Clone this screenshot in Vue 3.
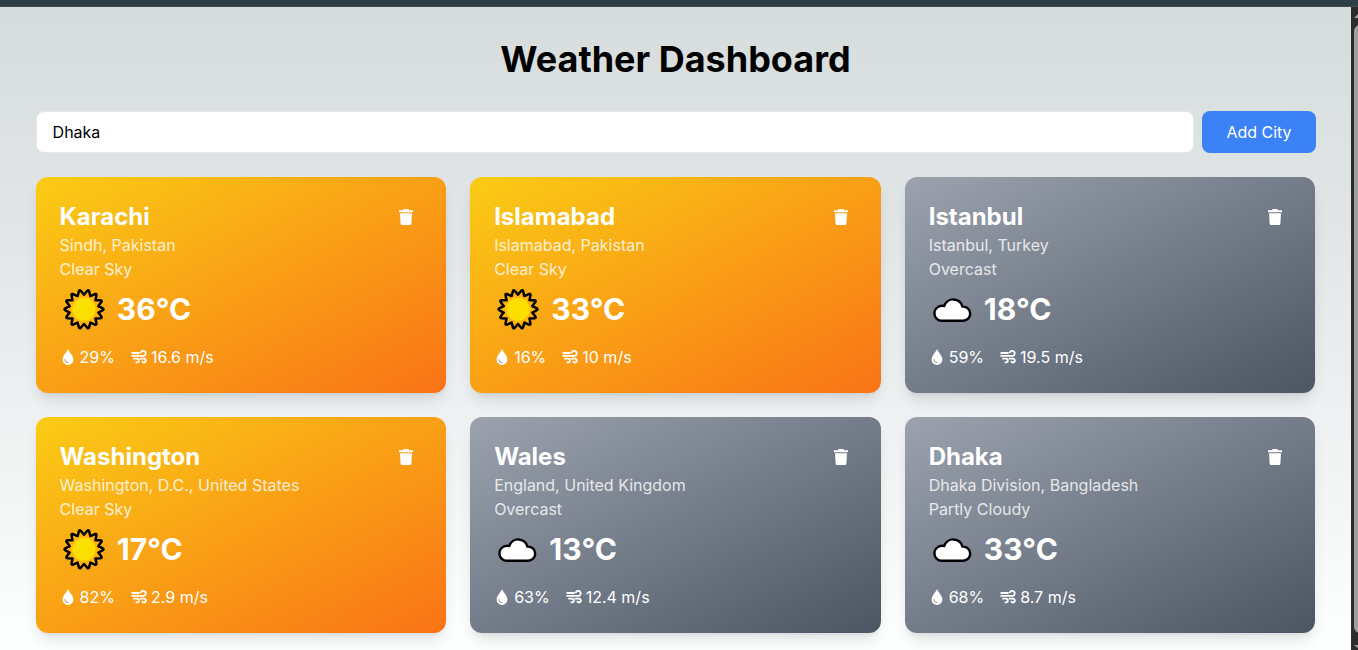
<script setup>
import { ref } from 'vue'

const city = ref('Dhaka')
const cards = ref([
  { name: 'Karachi', region: 'Sindh, Pakistan', sky: 'Clear Sky', temp: 36, humidity: 29, wind: 16.6 },
  { name: 'Islamabad', region: 'Islamabad, Pakistan', sky: 'Clear Sky', temp: 33, humidity: 16, wind: 10 },
  { name: 'Istanbul', region: 'Istanbul, Turkey', sky: 'Overcast', temp: 18, humidity: 59, wind: 19.5 },
  { name: 'Washington', region: 'Washington, D.C., United States', sky: 'Clear Sky', temp: 17, humidity: 82, wind: 2.9 },
  { name: 'Wales', region: 'England, United Kingdom', sky: 'Overcast', temp: 13, humidity: 63, wind: 12.4 },
  { name: 'Dhaka', region: 'Dhaka Division, Bangladesh', sky: 'Partly Cloudy', temp: 33, humidity: 68, wind: 8.7 },
])
const remove = (i) => cards.value.splice(i, 1)

// Fourteen rounded rays around the sun, with a notch at twelve o'clock
const at = (r, a) => `${(24 + r * Math.sin(a)).toFixed(2)} ${(24.3 - r * Math.cos(a)).toFixed(2)}`
const step = (2 * Math.PI) / 14
const rays = 'M' + Array.from({ length: 14 }, (_, i) => {
  const a = i * step
  const tip = a + step / 2
  return `${i ? 'L' : ''}${at(14.7, a)}L${at(18.8, tip - 0.05)}Q${at(20.3, tip)} ${at(18.8, tip + 0.05)}`
}).join('') + 'Z'
</script>

<template>
  <div class="window">
    <div class="chrome"></div>
    <div class="body">
      <main class="page">
        <h1>Weather Dashboard</h1>
        <form class="search" @submit.prevent>
          <input v-model="city" type="text" />
          <button class="add" type="submit">Add City</button>
        </form>
        <section class="grid">
          <article v-for="(c, i) in cards" :key="c.name" class="card" :class="c.sky === 'Clear Sky' ? 'sunny' : 'cloudy'">
            <header>
              <h2>{{ c.name }}</h2>
              <button class="trash" type="button" aria-label="Remove" @click="remove(i)">
                <svg width="16" height="18" viewBox="0 0 16 18"><path d="M1 2.2h3.8L5.7 1.1h4.6l.9 1.1H15v2H1zM2 5.2h12l-.6 10.3q-.1 1.5-1.5 1.5H4.1q-1.4 0-1.5-1.5z" /></svg>
              </button>
            </header>
            <p>{{ c.region }}</p>
            <p>{{ c.sky }}</p>
            <div class="now">
              <svg v-if="c.sky === 'Clear Sky'" class="sun" width="48" height="48" viewBox="0 0 48 48">
                <path :d="rays" fill="#ffb30f" stroke="#000" stroke-width="2.5" stroke-linejoin="round" />
                <circle cx="24" cy="24.3" r="11.6" fill="#fbdf00" />
              </svg>
              <svg v-else class="cloud" width="46" height="48" viewBox="0.5 0 46 48">
                <path d="M13.4 35.8H34.6a7.1 7.1 0 0 0 0-14.2L33.9 21.6A9.4 9.4 0 0 0 15.8 21Q14.6 20.7 13.4 20.8a7.5 7.5 0 0 0 0 15z" fill="#fff" stroke="#000" stroke-width="2.4" stroke-linejoin="round" />
              </svg>
              <strong>{{ c.temp }}°C</strong>
            </div>
            <footer>
              <span class="stat">
                <svg width="16" height="18" viewBox="0 0 16 18"><path d="M8 1C6.8 4.2 2.6 7.6 2.6 11.5a5.4 5.4 0 0 0 10.8 0C13.4 7.6 9.2 4.2 8 1z" /><path class="shine" d="M4.7 11.7a3.2 3.2 0 0 0 3.3 3" /></svg>
                {{ c.humidity }}%
              </span>
              <span class="stat">
                <svg class="wind" width="16" height="16" viewBox="0 0 16 16"><path d="M1.2 4H8M1.2 6.9H12.6a2.5 2.5 0 1 0-2.7-3.5M3 9.7H6a1.8 1.8 0 0 1 0 3.7H5.4M9.5 9.7h3.7a1.9 1.9 0 1 1-1.8 3" /></svg>
                {{ c.wind }} m/s
              </span>
            </footer>
          </article>
        </section>
      </main>
      <aside class="scrollbar">
        <span class="arrow up"></span>
        <span class="thumb"></span>
        <span class="arrow down"></span>
      </aside>
    </div>
  </div>
</template>

<style>
body { margin: 0; overflow: hidden; }
</style>

<style scoped>
* { box-sizing: border-box; }
.window { width: 1358px; height: 650px; display: flex; flex-direction: column; overflow: hidden; font: 16px/24px Inter, sans-serif; }
.chrome { height: 7px; flex: none; background: #2c3e48; border-bottom: 1px solid #3e4c54; }
.body { flex: 1; min-height: 0; display: flex; }
.page { flex: 1; padding: 32px 35.8px 0 35.6px; background: linear-gradient(#d6dcdb, #e1e5e6 33%, #fdfefe 98%); overflow: hidden; }
h1, h2, p { margin: 0; }
h1 { font-size: 36px; line-height: 40px; font-weight: 700; text-align: center; color: #000; }
.search { display: flex; align-items: center; gap: 8px; height: 42px; margin: 32px -0.8px 24px 0; }
input { flex: 1; height: 42px; min-width: 0; padding: 0 16px; border: 1px solid #e5e7eb; border-radius: 8px; background: #fff; color: #000; font: inherit; outline: none; }
.add { width: 114px; height: 42px; padding: 0; border: 0; border-radius: 8px; background: #3b82f6; color: #fff; font: inherit; }
.grid { display: grid; grid-template-columns: repeat(3, 1fr); gap: 24px; }
.card { height: 216px; padding: 24px; border-radius: 12px; color: #fff; box-shadow: 0 10px 15px -3px rgba(0, 0, 0, 0.1), 0 4px 6px -4px rgba(0, 0, 0, 0.1); }
.sunny { background: linear-gradient(to bottom right, #facc15, #f97316); }
.cloudy { background: linear-gradient(to bottom right, #9ca3af, #4b5563); }
header { display: flex; justify-content: space-between; align-items: center; height: 32px; }
h2 { font-size: 24px; line-height: 32px; font-weight: 700; }
.trash { display: flex; margin-right: 8px; padding: 0; border: 0; background: none; }
svg { flex: none; fill: #fff; }
p { opacity: 0.8; }
.now { display: flex; align-items: center; height: 48px; margin-top: 4px; }
.now strong { font-size: 30px; line-height: 36px; font-weight: 700; margin: 0 0 0 9.2px; }
footer { display: flex; gap: 16px; margin-top: 12px; }
.stat { display: flex; align-items: center; gap: 4px; }
.shine { fill: none; stroke: #9a8f86; stroke-width: 1; stroke-linecap: round; }
.wind { fill: none; stroke: #fff; stroke-width: 1.8; stroke-linecap: round; }
.scrollbar { width: 7px; flex: none; padding-left: 3px; background: #2c2c2c; display: flex; flex-direction: column; overflow: hidden; }
.thumb { width: 12px; flex: 1; margin: 7px 0 0; border-radius: 6px; background: #9f9f9f; }
.arrow { width: 0; border: 6px solid transparent; }
.up { border-top: 0; border-bottom: 6px solid #9f9f9f; margin-top: 5px; }
.down { margin-top: 12px; border-bottom: 0; border-top: 5px solid #9f9f9f; }
</style>
